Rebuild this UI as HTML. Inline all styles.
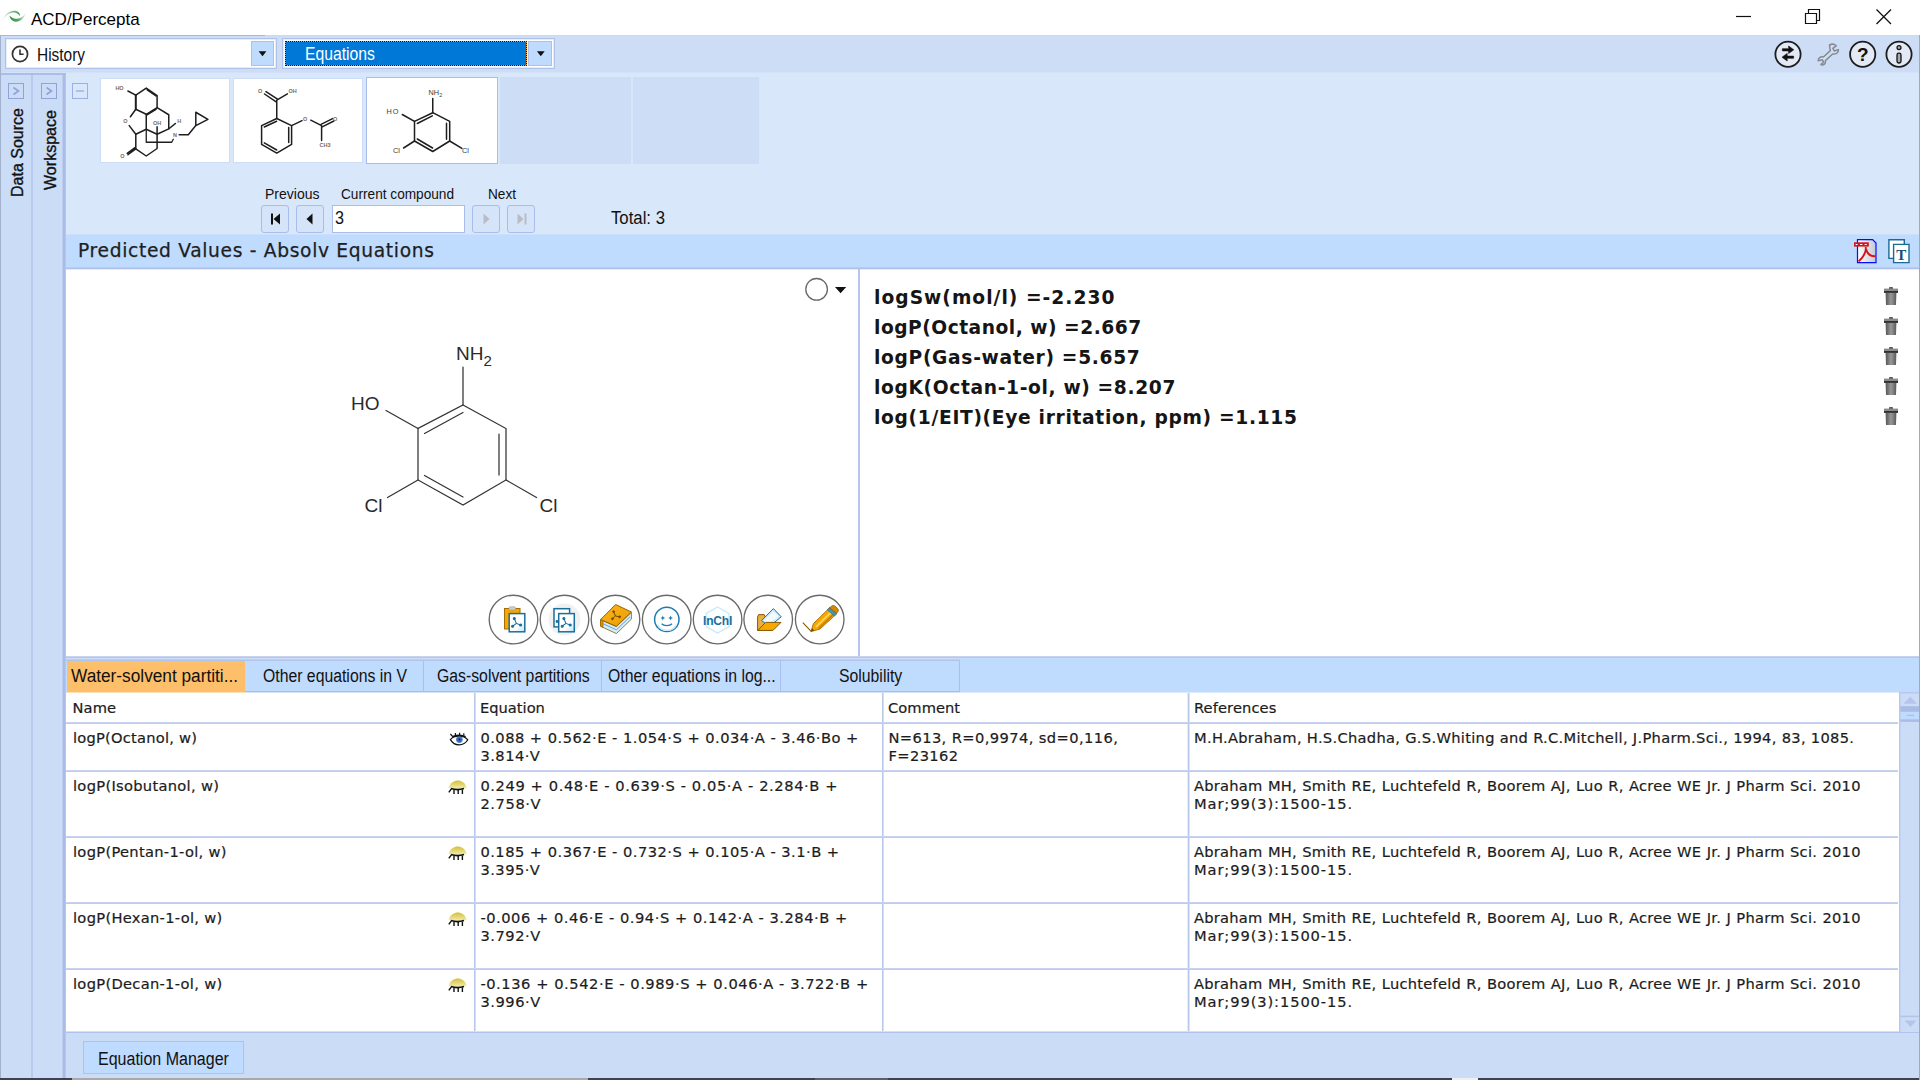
<!DOCTYPE html>
<html lang="en">
<head>
<meta charset="utf-8">
<title>ACD/Percepta</title>
<style>
*{box-sizing:border-box;margin:0;padding:0}
html,body{width:1920px;height:1080px;overflow:hidden;background:#d9e7fa;font-family:"Liberation Sans",sans-serif;color:#000}
.a{position:absolute}
.t{position:absolute;white-space:pre;line-height:1;transform-origin:0 0}
.ms{font-family:"Liberation Sans",sans-serif;color:#111;-webkit-text-stroke-width:0}
.vd{font-family:"DejaVu Sans","Liberation Sans",sans-serif;color:#1a1a1a}
#titlebar{left:0;top:0;width:1920px;height:35px;background:#fff}
#toolband{left:0;top:35px;width:1920px;height:38px;background:linear-gradient(to bottom,#cdd9ee 0 1px,#cdddf6 1px 37px,#d3e2f8 37px 38px)}
#leftedge{left:0;top:35px;width:1px;height:1045px;background:#a2b2cc}
#side{left:1px;top:73px;width:65px;height:1007px;background:linear-gradient(to right,#cbdcf6 0 61px,#bfcdf0 61px 62px,#aabbe6 62px 64px,#b6c6ed 64px 65px);border-top:2px solid #adbde8}
#sidediv{left:31px;top:75px;width:2px;height:1005px;background:#b9caef}
.sqb{position:absolute;width:16px;height:16px;border:1px solid #9db0e3}
.combo{position:absolute;background:#fff;border:1px solid #b0c2ea;box-shadow:inset 0 0 0 1px #e6ecf9}
.ddb{position:absolute;background:#bfdbfe;border:1px solid #adbfea}
.thumb{position:absolute;background:#fff;border:1px solid #cfdcf5}
.navb{position:absolute;width:28px;height:28px;border:1px solid #a9bdea;border-radius:3px;background:#d6e4f9}
#hdr{left:66px;top:234px;width:1854px;height:36px;background:linear-gradient(to bottom,#cce0fc 0 1px,#bfdbfe 1px 33px,#b8ccf2 33px 34px,#b0c2ea 34px 35px,#e5eaf8 35px 36px)}
#molpanel{left:66px;top:270px;width:792px;height:386px;background:#fff}
#vdiv{left:858px;top:269px;width:2px;height:389px;background:#b6c6ef}
#respanel{left:860px;top:270px;width:1059px;height:386px;background:#fff}
#rightedge{left:1919px;top:35px;width:1px;height:1045px;background:#9aabc9}
#band1{left:66px;top:656px;width:1854px;height:5px;background:linear-gradient(to bottom,#c8d4ef 0 1px,#b4c6ea 1px 2px,#c4ddfd 2px 3px,#bfdbfe 3px 5px)}
#band2{left:66px;top:658px;width:894px;height:3px;background:linear-gradient(to bottom,#cdddf6 0 1px,#bfcdf1 1px 2px,#b0c4ec 2px 3px)}
#tabbar{left:66px;top:661px;width:1854px;height:31px;background:#bfdbfe}
.tab{position:absolute;top:661px;height:31px;border-right:1px solid #a9c0ee;border-bottom:1px solid #aabce8}
#grid{left:66px;top:692px;width:1833px;height:340px;background:#fff}
.hl{position:absolute;left:66px;width:1832px;height:2px;background:linear-gradient(to bottom,#c8d3f1 0 1px,#bfcbee 1px 2px)}
.vl{position:absolute;top:692px;width:2px;height:340px;background:linear-gradient(to right,#b9c7eb 0 1px,#d5def4 1px 2px)}
#sb{left:1899px;top:692px;width:21px;height:340px;background:#cbdcf6;border-left:2px solid #b3c4ec}
#botbar{left:66px;top:1032px;width:1854px;height:48px;background:#cbdcf6;border-top:1px solid #b1c3ec}
.cell{position:absolute;white-space:pre;font-family:"DejaVu Sans","Liberation Sans",sans-serif;font-size:14.67px;line-height:18px;color:#1c1c1c;-webkit-text-stroke:.2px #1c1c1c}
.circ{position:absolute;width:49px;height:49px;border:1.6px solid #5a5a5a;border-radius:50%;background:#fff}
</style>
</head>
<body>
<!-- title bar -->
<div class="a" id="titlebar"></div>
<div class="a" id="toolband"></div>
<div class="a" style="left:0;top:35px;width:265px;height:1px;background:#a9b9d2"></div>
<div class="a" id="side"></div>
<div class="a" id="sidediv"></div>
<div class="a" id="leftedge"></div>

<div class="t" style="left:31px;top:10.5px;font-size:17px;color:#000">ACD/Percepta</div>

<!-- logo -->
<svg class="a" style="left:0;top:0" width="30" height="35" viewBox="0 0 30 35">
 <defs>
  <linearGradient id="lg1" x1="0" y1="0" x2="1" y2="0"><stop offset="0" stop-color="#4aa25a" stop-opacity=".08"/><stop offset=".45" stop-color="#4aa25a" stop-opacity=".55"/><stop offset="1" stop-color="#33914a"/></linearGradient>
  <linearGradient id="lg2" x1="0" y1="0" x2="1" y2="0"><stop offset="0" stop-color="#33914a"/><stop offset=".55" stop-color="#3f9a4e" stop-opacity=".9"/><stop offset="1" stop-color="#4aa25a" stop-opacity=".1"/></linearGradient>
 </defs>
 <path d="M2.2 21 C4.4 15 8.6 11.2 13.6 10.8 C17.8 10.6 20.4 13.2 19.8 16.2 C18.6 13.8 16.4 12.6 13.6 12.6 C9.2 12.8 5.6 15.6 2.2 21 Z" fill="url(#lg1)"/>
 <path d="M9.4 15.4 C9.8 19 13 21.8 16.6 21.7 C21.2 21.5 24.6 17.6 25.9 12.6 C23.6 16.6 20.6 18.8 17.2 18.8 C14 18.8 11.6 17.6 9.4 15.4 Z" fill="url(#lg2)"/>
</svg>
<!-- window controls -->
<svg class="a" style="left:1730px;top:0" width="170" height="35" viewBox="0 0 170 35">
 <path d="M6 16.5 H21" stroke="#111" stroke-width="1.2" fill="none"/>
 <path d="M75.5 13.5 H86.5 V23.5 H75.5 Z M78.5 13.5 V9.5 H89.5 V20.5 H86.5" stroke="#111" stroke-width="1.2" fill="none"/>
 <path d="M146.5 9.5 L161 24 M161 9.5 L146.5 24" stroke="#111" stroke-width="1.3" fill="none"/>
</svg>

<!-- combos -->
<div class="combo" style="left:5px;top:38px;width:272px;height:31px"></div>
<div class="ddb" style="left:251px;top:41px;width:23px;height:25px"></div>
<svg class="a" style="left:258px;top:50px" width="10" height="8"><path d="M0.6 1.2 H8.4 L4.5 6.2 Z" fill="#111"/></svg>
<svg class="a" style="left:10px;top:44px" width="20" height="20" viewBox="0 0 20 20"><circle cx="10" cy="10" r="7.6" fill="#fff" stroke="#333" stroke-width="1.7"/><path d="M10 5.5 V10.3 H13.6" fill="none" stroke="#333" stroke-width="1.6"/></svg>
<div class="t ms" style="left:36.8px;top:45.5px;font-size:18px;transform:scaleX(.857)">History</div>

<div class="combo" style="left:282px;top:38px;width:273px;height:31px"></div>
<div class="a" style="left:285px;top:41px;width:242px;height:25px;background:#f0963a;border:1px dotted #111"><div style="width:100%;height:100%;background:#0078d7"></div></div>
<div class="ddb" style="left:528px;top:41px;width:24px;height:25px"></div>
<svg class="a" style="left:536px;top:50px" width="10" height="8"><path d="M0.9 1.2 H8.7 L4.8 6.2 Z" fill="#111"/></svg>
<div class="t ms" style="left:305px;top:45px;font-size:18px;color:#fff;-webkit-text-stroke-width:0;transform:scaleX(.874)">Equations</div>

<!-- side tabs -->
<div class="sqb" style="left:8px;top:83px;border-color:#8fa3d9"></div>
<svg class="a" style="left:8px;top:83px" width="16" height="16"><path d="M5.5 4.5 L10.5 8 L5.5 11.5" fill="none" stroke="#8fa3d9" stroke-width="1.6"/></svg>
<div class="sqb" style="left:41px;top:83px;border-color:#8fa3d9"></div>
<svg class="a" style="left:41px;top:83px" width="16" height="16"><path d="M5.5 4.5 L10.5 8 L5.5 11.5" fill="none" stroke="#8fa3d9" stroke-width="1.6"/></svg>
<div class="sqb" style="left:72px;top:83px"></div>
<svg class="a" style="left:72px;top:83px" width="16" height="16"><path d="M4 8 H12" fill="none" stroke="#9db0e3" stroke-width="1.5"/></svg>
<div class="t ms" style="left:8.5px;top:197px;font-size:17px;-webkit-text-stroke-width:.35px;transform:rotate(-90deg) scaleX(.941)">Data Source</div>
<div class="t ms" style="left:41.5px;top:190px;font-size:17px;-webkit-text-stroke-width:.35px;transform:rotate(-90deg) scaleX(.944)">Workspace</div>

<!-- thumbnails -->
<div class="thumb" style="left:100px;top:78px;width:130px;height:85px"></div>
<div class="thumb" style="left:233px;top:78px;width:130px;height:85px"></div>
<div class="thumb" style="left:366px;top:77px;width:132px;height:87px;border:1px solid #a9bdea"></div>
<div class="a" style="left:500px;top:77px;width:131px;height:87px;background:#cdddf6"></div>
<div class="a" style="left:633px;top:77px;width:126px;height:87px;background:#cdddf6"></div>

<!-- navigation -->
<div class="t ms" style="left:265px;top:186px;font-size:15px;-webkit-text-stroke-width:0;transform:scaleX(.934)">Previous</div>
<div class="t ms" style="left:341px;top:186px;font-size:15px;-webkit-text-stroke-width:0;transform:scaleX(.910)">Current compound</div>
<div class="t ms" style="left:488px;top:186px;font-size:15px;-webkit-text-stroke-width:0;transform:scaleX(.908)">Next</div>
<div class="navb" style="left:261px;top:205px"></div>
<div class="navb" style="left:296px;top:205px"></div>
<div class="a" style="left:332px;top:205px;width:133px;height:28px;background:#fff;border:1px solid #a9bdea"></div>
<div class="navb" style="left:472px;top:205px"></div>
<div class="navb" style="left:507px;top:205px"></div>
<svg class="a" style="left:261px;top:205px" width="28" height="28"><path d="M11 8.5 V19.5" stroke="#111" stroke-width="2"/><path d="M19 8.5 V19.5 L12.5 14 Z" fill="#111"/></svg>
<svg class="a" style="left:296px;top:205px" width="28" height="28"><path d="M16.5 8.5 V19.5 L10.5 14 Z" fill="#111"/></svg>
<svg class="a" style="left:472px;top:205px" width="28" height="28"><path d="M11.5 8.5 V19.5 L17.5 14 Z" fill="#b9bcc4"/></svg>
<svg class="a" style="left:507px;top:205px" width="28" height="28"><path d="M10.5 8.5 V19.5 L16.5 14 Z" fill="#b9bcc4"/><path d="M18.5 8.5 V19.5" stroke="#b9bcc4" stroke-width="2"/></svg>
<div class="t ms" style="left:335px;top:209px;font-size:18px;transform:scaleX(.9)">3</div>
<div class="t ms" style="left:611px;top:209px;font-size:18px;transform:scaleX(.93)">Total: 3</div>

<!-- header -->
<div class="a" id="hdr"></div>
<div class="t vd" style="left:78px;top:242px;font-size:18.67px;letter-spacing:.668px;color:#1e1e1e;-webkit-text-stroke:.25px #1e1e1e">Predicted Values - Absolv Equations</div>
<div class="a" id="molpanel"></div>
<div class="a" id="vdiv"></div>
<div class="a" id="respanel"></div>

<!-- molecule -->
<svg class="a" style="left:330px;top:330px" width="250" height="200" viewBox="330 330 250 200">
 <g fill="none" stroke="#333" stroke-width="1.25" stroke-linecap="round">
  <path d="M463 405 L506 428.5 L506 480 L463 505 L418 480 L418 428.5 Z"/>
  <path d="M463 412.5 L424.5 433.5"/>
  <path d="M499 434 L499 475"/>
  <path d="M424.5 475.5 L463 497"/>
  <path d="M463 405 V367"/>
  <path d="M418 428.5 L386 410.5"/>
  <path d="M418 480 L387.5 497.5"/>
  <path d="M506 480 L536.5 497.5"/>
 </g>
 <g font-family="Liberation Sans, sans-serif" font-size="19" fill="#2a2a2a">
  <text x="456" y="359.6">NH<tspan font-size="15" dy="6.6">2</tspan></text>
  <text x="351" y="409.8">HO</text>
  <text x="364.6" y="511.6">Cl</text>
  <text x="539.5" y="511.5">Cl</text>
 </g>
</svg>
<svg class="a" style="left:803px;top:277px" width="48" height="26"><circle cx="13.6" cy="12.3" r="10.8" fill="#fff" stroke="#666" stroke-width="1.3"/><path d="M32 10 H43.2 L37.6 16.2 Z" fill="#111"/></svg>

<!-- results -->
<div class="t vd" style="left:874px;top:289px;font-size:18.67px;font-weight:700;letter-spacing:1.02px;color:#151515">logSw(mol/l) =-2.230</div>
<div class="t vd" style="left:874px;top:319px;font-size:18.67px;font-weight:700;letter-spacing:.5px;color:#151515">logP(Octanol, w) =2.667</div>
<div class="t vd" style="left:874px;top:349px;font-size:18.67px;font-weight:700;letter-spacing:.67px;color:#151515">logP(Gas-water) =5.657</div>
<div class="t vd" style="left:874px;top:379px;font-size:18.67px;font-weight:700;letter-spacing:.64px;color:#151515">logK(Octan-1-ol, w) =8.207</div>
<div class="t vd" style="left:874px;top:409px;font-size:18.67px;font-weight:700;letter-spacing:.678px;color:#151515">log(1/EIT)(Eye irritation, ppm) =1.115</div>

<!-- tabs -->
<div class="a" id="band1"></div>
<div class="a" id="band2"></div>
<div class="a" id="tabbar"></div>
<div class="tab" style="left:67px;width:178px;height:31px;background:#fdbf6a;border:none"></div>
<div class="tab" style="left:245px;width:179px"></div>
<div class="tab" style="left:424px;width:178px"></div>
<div class="tab" style="left:602px;width:179px"></div>
<div class="tab" style="left:781px;width:179px"></div>
<div class="t ms" style="left:71px;top:666.5px;font-size:18px;transform:scaleX(.958)">Water-solvent partiti...</div>
<div class="t ms" style="left:263px;top:666.5px;font-size:18px;transform:scaleX(.877)">Other equations in V</div>
<div class="t ms" style="left:437px;top:666.5px;font-size:18px;transform:scaleX(.877)">Gas-solvent partitions</div>
<div class="t ms" style="left:608px;top:666.5px;font-size:18px;transform:scaleX(.877)">Other equations in log...</div>
<div class="t ms" style="left:839px;top:666.5px;font-size:18px;transform:scaleX(.877)">Solubility</div>

<!-- grid -->
<div class="a" id="grid"></div>
<div class="vl" style="left:474px"></div>
<div class="vl" style="left:882px"></div>
<div class="vl" style="left:1187px;width:3px;background:linear-gradient(to right,#e6ebf8 0 1px,#b9c7eb 1px 2px,#dfe5f6 2px 3px)"></div>
<div class="hl" style="top:722px"></div>
<div class="hl" style="top:770px"></div>
<div class="hl" style="top:836px"></div>
<div class="hl" style="top:902px"></div>
<div class="hl" style="top:968px"></div>
<div class="a" id="sb"></div>
<div class="a" id="botbar"></div>
<div class="a" style="left:66px;top:1031px;width:1833px;height:1px;background:#d8dff3"></div>
<div class="a" style="left:66px;top:692px;width:894px;height:1px;background:#d8e1f5"></div>
<div class="a" style="left:960px;top:692px;width:939px;height:1px;background:#deebfe"></div>
<div class="a" style="left:67px;top:692px;width:178px;height:1px;background:#fee0b5"></div>

<div class="cell" style="left:72.5px;top:699px;letter-spacing:.1px">Name</div>
<div class="cell" style="left:480px;top:699px;letter-spacing:0">Equation</div>
<div class="cell" style="left:888px;top:699px;letter-spacing:.05px">Comment</div>
<div class="cell" style="left:1194px;top:699px;letter-spacing:.1px">References</div>

<div class="cell" style="left:73px;top:729px;letter-spacing:.228px">logP(Octanol, w)</div>
<div class="cell" style="left:480.4px;top:729px;letter-spacing:.477px">0.088 + 0.562·E - 1.054·S + 0.034·A - 3.46·Bo +
3.814·V</div>
<div class="cell" style="left:888.4px;top:729px;letter-spacing:.4px">N=613, R=0,9974, sd=0,116,
F=23162</div>
<div class="cell" style="left:1194px;top:729px;letter-spacing:.3px">M.H.Abraham, H.S.Chadha, G.S.Whiting and R.C.Mitchell, J.Pharm.Sci., 1994, 83, 1085.</div>

<div class="cell" style="left:73px;top:777px;letter-spacing:.3px">logP(Isobutanol, w)</div>
<div class="cell" style="left:480.4px;top:777px;letter-spacing:.6px">0.249 + 0.48·E - 0.639·S - 0.05·A - 2.284·B +
2.758·V</div>
<div class="cell" style="left:1194px;top:777px;letter-spacing:.234px;word-spacing:.5px">Abraham MH, Smith RE, Luchtefeld R, Boorem AJ, Luo R, Acree WE Jr. J Pharm Sci. 2010
<span style="letter-spacing:.9px;word-spacing:0">Mar;99(3):1500-15.</span></div>

<div class="cell" style="left:73px;top:843px;letter-spacing:.3px">logP(Pentan-1-ol, w)</div>
<div class="cell" style="left:480.4px;top:843px;letter-spacing:.477px">0.185 + 0.367·E - 0.732·S + 0.105·A - 3.1·B +
3.395·V</div>
<div class="cell" style="left:1194px;top:843px;letter-spacing:.234px;word-spacing:.5px">Abraham MH, Smith RE, Luchtefeld R, Boorem AJ, Luo R, Acree WE Jr. J Pharm Sci. 2010
<span style="letter-spacing:.9px;word-spacing:0">Mar;99(3):1500-15.</span></div>

<div class="cell" style="left:73px;top:909px;letter-spacing:.3px">logP(Hexan-1-ol, w)</div>
<div class="cell" style="left:480.4px;top:909px;letter-spacing:.53px">-0.006 + 0.46·E - 0.94·S + 0.142·A - 3.284·B +
3.792·V</div>
<div class="cell" style="left:1194px;top:909px;letter-spacing:.234px;word-spacing:.5px">Abraham MH, Smith RE, Luchtefeld R, Boorem AJ, Luo R, Acree WE Jr. J Pharm Sci. 2010
<span style="letter-spacing:.9px;word-spacing:0">Mar;99(3):1500-15.</span></div>

<div class="cell" style="left:73px;top:975px;letter-spacing:.3px">logP(Decan-1-ol, w)</div>
<div class="cell" style="left:480.4px;top:975px;letter-spacing:.555px">-0.136 + 0.542·E - 0.989·S + 0.046·A - 3.722·B +
3.996·V</div>
<div class="cell" style="left:1194px;top:975px;letter-spacing:.234px;word-spacing:.5px">Abraham MH, Smith RE, Luchtefeld R, Boorem AJ, Luo R, Acree WE Jr. J Pharm Sci. 2010
<span style="letter-spacing:.9px;word-spacing:0">Mar;99(3):1500-15.</span></div>

<!-- bottom -->
<div class="a" style="left:83px;top:1041px;width:161px;height:33px;background:#bfdbff;border:1px solid #a9c4f2"></div>
<div class="t ms" style="left:98px;top:1050px;font-size:18px;transform:scaleX(.89)">Equation Manager</div>
<div class="a" style="left:0;top:1078px;width:1920px;height:2px;background:#3d4150"></div>
<div class="a" style="left:72px;top:1078px;width:516px;height:2px;background:#a9a9a9"></div>
<div class="a" style="left:815px;top:1078px;width:73px;height:2px;background:#5b5f6b"></div>
<div class="a" style="left:1452px;top:1078px;width:26px;height:2px;background:#f0f0f0"></div>

<!-- thumbnail molecules -->
<svg class="a" style="left:100px;top:76px" width="132" height="90" viewBox="100 76 132 90">
 <g fill="none" stroke="#1e1e1e" stroke-width="1.5" stroke-linecap="round" stroke-linejoin="round">
  <path d="M135.8 95.2 L146.25 88.1 L157.1 95.6 L157.1 107.7 L146.25 114.3 L135.8 109.3"/>
  <path d="M135.8 95.2 L135.8 109.3" stroke-width="2"/>
  <path d="M147.2 89.8 L156 96" />
  <path d="M156 109.4 L147 114.9" stroke-width="1.6"/>
  <path d="M127.9 91 L135.8 95.2"/>
  <path d="M135.8 109.3 L130.4 116.8"/>
  <path d="M129.2 125.6 L135.8 134.3 L146.25 129.3 L146.25 114.3"/>
  <path d="M146.25 129.3 L157.1 134.3 L168.75 128.9 L168.75 114.75 L157.1 107.7"/>
  <path d="M169.2 128.5 L175.4 123.5" stroke-width="1.6"/>
  <path d="M157.1 126.8 L157.1 148.5 L146.25 156 L135.8 148.9 L135.8 134.3"/>
  <path d="M135.8 148.9 L127.9 154.75 M135 147.6 L127.2 153.3" />
  <path d="M146.25 129.3 L146.25 142.25 L171.7 142.25 L173.3 139.3" stroke-width="1.3"/>
  <path d="M179.2 134.75 L188.3 134.75 L195.8 125.6 L195.8 112.25 L207.9 119.3 L195.8 125.6"/>
 </g>
 <g font-family="Liberation Sans, sans-serif" font-size="5.5" font-weight="700" fill="#7a6a58">
  <text x="115.4" y="90.3">HO</text>
  <text x="123.2" y="123.4">O</text>
  <text x="153" y="124.6">OH</text>
  <text x="177.3" y="123.3">H</text>
  <text x="173" y="137">N</text>
  <text x="120.3" y="157.6">O</text>
 </g>
</svg>
<svg class="a" style="left:232px;top:76px" width="132" height="90" viewBox="232 76 132 90">
 <g fill="none" stroke="#1e1e1e" stroke-width="1.5" stroke-linecap="round" stroke-linejoin="round">
  <path d="M276.75 118.5 L291.6 125.6 L291.6 144.3 L276.75 153.1 L261.6 144.3 L261.6 125.6 Z"/>
  <path d="M264.3 127 L276.6 121.2 M288.7 127.5 L288.7 142.6 M264.3 142.8 L276.7 150"/>
  <path d="M276.75 118.5 L276.75 100.2 L287.4 93.9"/>
  <path d="M277.5 99.2 L266 91.6 M275.8 101.6 L264.5 94"/>
  <path d="M291.6 125.6 L302 120.6 M310.75 120.2 L321.6 125.6 L321.6 140.6"/>
  <path d="M321 124.4 L332.6 118.6 M322.2 126.8 L333.9 121"/>
 </g>
 <g font-family="Liberation Sans, sans-serif" font-size="5.5" font-weight="700" fill="#7a6a58">
  <text x="258" y="93.4">O</text>
  <text x="288.6" y="93.4">OH</text>
  <text x="303" y="120.5">O</text>
  <text x="333" y="120.5">O</text>
  <text x="319.5" y="147.3">CH3</text>
 </g>
</svg>
<svg class="a" style="left:366px;top:76px" width="132" height="90" viewBox="366 76 132 90">
 <g fill="none" stroke="#1e1e1e" stroke-width="1.5" stroke-linecap="round" stroke-linejoin="round">
  <path d="M432.75 112.7 L449.7 121.4 L449.7 141 L432.75 151.5 L414.5 141 L414.5 121.4 Z"/>
  <path d="M417.3 123.5 L432.3 115.8 M446.5 123.3 L446.5 139.2 M417.3 139 L432.6 148"/>
  <path d="M432.75 112.7 V98.4 M414.5 121.4 L402.3 114.5 M414.5 141 L403.6 148 M449.7 141 L461.9 148.4"/>
 </g>
 <g font-family="Liberation Sans, sans-serif" font-size="7.3" fill="#3a3a3a">
  <text x="428.6" y="94.9">NH<tspan font-size="5.3" dy="2">2</tspan></text>
  <text x="386.6" y="114.2" letter-spacing=".8">HO</text>
  <text x="393" y="153.2">Cl</text>
  <text x="462" y="153.2">Cl</text>
 </g>
</svg>

<!-- top-right toolbar icons -->
<svg class="a" style="left:1770px;top:36px" width="150" height="36" viewBox="1770 36 150 36">
 <g fill="#e3e9f5" stroke="#1c1c1c" stroke-width="1.8">
  <circle cx="1788" cy="54.3" r="12.6"/>
  <circle cx="1862.7" cy="54.3" r="12.6"/>
  <circle cx="1899" cy="54.3" r="12.6"/>
 </g>
 <path d="M1782.4 48.7 H1788.6 V46 L1793.8 49.8 L1788.6 53.6 V50.9 H1782.4 Z M1793.6 56.1 H1787.2 V53.4 L1782 57.2 L1787.2 61 V58.3 H1793.6 Z" fill="#111" stroke="#111" stroke-width=".6" stroke-linejoin="round"/>
 <path d="M1829.5 45 C1832 43.6 1834.6 44.2 1836.2 45.8 L1832.8 48.4 L1834.4 51 L1838.4 49.6 C1838.6 52.2 1836.6 54.6 1832.6 54 L1825.4 60.6 C1826.2 64.2 1823 65.6 1820.8 64.6 L1823.6 62.2 L1822.4 59.8 L1818.2 60.8 C1818 58.2 1820.6 56.2 1823.4 57 L1830.4 50.6 C1829.6 48.4 1829.8 46.4 1829.5 45 Z" fill="#d3dff3" stroke="#858a93" stroke-width="1.5" stroke-linejoin="round"/>
 <text x="1862.8" y="61.2" font-family="Liberation Sans, sans-serif" font-size="19" font-weight="700" text-anchor="middle" fill="#111">?</text>
 <circle cx="1899" cy="47.6" r="2" fill="#aaa" stroke="#111" stroke-width="1.2"/>
 <rect x="1897" y="53.2" width="4" height="9.8" rx="1.8" fill="#aaa" stroke="#111" stroke-width="1.3"/>
</svg>

<!-- header icons: pdf + copy text -->
<svg class="a" style="left:1850px;top:237px" width="64" height="30" viewBox="1850 237 64 30">
 <defs><linearGradient id="pg" x1="0" y1="0" x2="1" y2="0"><stop offset="0" stop-color="#fff"/><stop offset="1" stop-color="#c3c9d6"/></linearGradient></defs>
 <path d="M1857.5 239.6 H1872.6 L1876 243 V262.6 H1857.5 Z" fill="url(#pg)" stroke="#0a0aff" stroke-width="1.2"/>
 <rect x="1854" y="242.3" width="14.8" height="4.3" fill="#d2141a"/>
 <path d="M1855.6 244.5 H1857.6 M1860 244.5 H1862.4 M1864.6 244.5 H1866.8" stroke="#fff" stroke-width="1.1"/>
 <path d="M1865.6 247 C1866.6 251 1865 255.5 1858.6 261.5 M1866.2 249.5 C1867.5 254 1870.5 256.5 1875.5 256.3" fill="none" stroke="#d2141a" stroke-width="1.9"/>
 <path d="M1888.9 239.8 H1904.3 V258.4 H1888.9 Z" fill="#fff" stroke="#1b6a95" stroke-width="1.4"/>
 <path d="M1893.6 244.4 H1909 V262.6 H1893.6 Z" fill="#fff" stroke="#1b6a95" stroke-width="1.4"/>
 <text x="1901.3" y="260" font-family="Liberation Serif, serif" font-size="15" font-weight="700" text-anchor="middle" fill="#174e6e">T</text>
</svg>

<!-- trash icons -->
<svg class="a" style="left:1882px;top:286px" width="18" height="142" viewBox="0 0 18 142">
 <defs>
  <linearGradient id="tg" x1="0" y1="0" x2="1" y2="0"><stop offset="0" stop-color="#555"/><stop offset=".5" stop-color="#999"/><stop offset="1" stop-color="#5a5a5a"/></linearGradient>
  <g id="tr"><rect x="7" y="1" width="4" height="2.4" rx="1" fill="#555"/><rect x="2" y="2.6" width="14" height="3" fill="#8a8a8a"/><rect x="2" y="5.2" width="14" height="1.6" fill="#111"/><path d="M3.6 7 H14.4 L14 19 H4 Z" fill="url(#tg)"/></g>
 </defs>
 <use href="#tr" y="0"/><use href="#tr" y="30"/><use href="#tr" y="60"/><use href="#tr" y="90"/><use href="#tr" y="120"/>
</svg>

<!-- circle buttons -->
<svg class="a" style="left:486px;top:592px" width="362" height="56" viewBox="486 592 362 56">
 <defs>
  <linearGradient id="pp" x1="0" y1="0" x2="1" y2="1"><stop offset="0" stop-color="#fff"/><stop offset=".6" stop-color="#fff"/><stop offset="1" stop-color="#bfe3f7"/></linearGradient>
  <linearGradient id="og" x1="0" y1="0" x2="1" y2="1"><stop offset="0" stop-color="#ffb81c"/><stop offset="1" stop-color="#e89a00"/></linearGradient>
 </defs>
 <g fill="#fff" stroke="#6a6a6a" stroke-width="1.35">
  <circle cx="513.5" cy="619.5" r="24.3"/><circle cx="564.5" cy="619.5" r="24.3"/><circle cx="615.5" cy="619.5" r="24.3"/>
  <circle cx="666.7" cy="619.5" r="24.3"/><circle cx="717.6" cy="619.5" r="24.3"/><circle cx="768.2" cy="619.5" r="24.3"/><circle cx="819.7" cy="619.5" r="24.3"/>
 </g>
 <!-- paste -->
 <rect x="504.5" y="608.5" width="15.5" height="20.5" fill="#f6a800" stroke="#a86c00" stroke-width="1"/>
 <rect x="509" y="606.8" width="6.5" height="3.2" rx="1.2" fill="#cfcfcf" stroke="#9a9a9a" stroke-width=".6"/>
 <rect x="509.2" y="613.6" width="15.6" height="18.2" fill="url(#pp)" stroke="#1b6f9c" stroke-width="1.5"/>
 <g stroke="#1b6f9c" stroke-width="1.1" fill="#1b6f9c"><path d="M514.3 618.6 L516.4 623.4 L520.6 625 M516.4 623.4 L512.6 626.2" fill="none"/><circle cx="514.3" cy="618.6" r="1"/><circle cx="520.6" cy="625" r="1"/><circle cx="512.6" cy="626.2" r="1"/></g>
 <!-- copy -->
 <circle cx="564.5" cy="619.5" r="16" fill="#f1f1f1"/>
 <rect x="554" y="608.7" width="15.6" height="18.2" fill="#fff" stroke="#1b6f9c" stroke-width="1.5"/>
 <rect x="558.7" y="613.6" width="15.6" height="18.2" fill="url(#pp)" stroke="#1b6f9c" stroke-width="1.5"/>
 <g stroke="#1b6f9c" stroke-width="1.1" fill="#1b6f9c"><path d="M563.9 618.6 L566 623.4 L570.2 625 M566 623.4 L562.2 626.2" fill="none"/><circle cx="563.9" cy="618.6" r="1"/><circle cx="570.2" cy="625" r="1"/><circle cx="562.2" cy="626.2" r="1"/><circle cx="557" cy="621.5" r=".9"/></g>
 <!-- book -->
 <path d="M600.6 626.3 L616.4 633.6 L631.4 619.2 L631.4 612.4 L616.4 626.6 L600.6 619.8 Z" fill="#d6edfa" stroke="#8a5a00" stroke-width=".8" stroke-linejoin="round"/>
 <path d="M602.5 623.5 L616.4 629.8 L630 616.8" fill="none" stroke="#5aa6d0" stroke-width="1"/>
 <path d="M600.6 619.6 L615.6 604.5 L631.4 612 L616.4 626.4 Z" fill="url(#og)" stroke="#9a6200" stroke-width="1" stroke-linejoin="round"/>
 <path d="M600.6 619.6 L600.6 626.3 L603 627.4 L603 620.6 Z" fill="#e09600" stroke="#8a5a00" stroke-width=".6"/>
 <g stroke="#6e4a00" stroke-width="1" fill="#6e4a00"><path d="M613.6 611.6 L615.4 616 L619.6 616.8 M615.4 616 L612.4 618.8" fill="none"/><circle cx="613.6" cy="611.6" r=".9"/><circle cx="619.6" cy="616.8" r=".9"/><circle cx="612.4" cy="618.8" r=".9"/></g>
 <!-- smiley -->
 <circle cx="666.8" cy="619.4" r="12.2" fill="#fff" stroke="#1e7ab0" stroke-width="1.5"/>
 <path d="M657.6 624.6 A10.6 10.6 0 0 0 676.4 624.6" fill="none" stroke="#cfeaf9" stroke-width="1.6"/>
 <g fill="#1e7ab0"><path d="M662.8 615.6 L663.5 617.3 L665.2 618 L663.5 618.7 L662.8 620.4 L662.1 618.7 L660.4 618 L662.1 617.3 Z"/><path d="M670.6 615.6 L671.3 617.3 L673 618 L671.3 618.7 L670.6 620.4 L669.9 618.7 L668.2 618 L669.9 617.3 Z"/></g>
 <path d="M661.6 623.8 C664 626.2 669.6 626.2 672 623.8" fill="none" stroke="#1e7ab0" stroke-width="1.3"/>
 <!-- inchi -->
 <path d="M717.6 607 L729 613.4 L729 626.6 L717.6 633 L706.2 626.6 L706.2 613.4 Z" fill="none" stroke="#c6e9fb" stroke-width="1.2"/>
 <text x="717.6" y="624.6" font-family="Liberation Sans, sans-serif" font-size="12" font-weight="700" text-anchor="middle" fill="#1b6f9c" letter-spacing="-.2">InChI</text>
 <!-- folder -->
 <path d="M757.6 617 L758.6 614.6 L764.2 614.6 L765.4 617 L771.6 617 L771.6 630.4 L757.6 630.4 Z" fill="#e9b040" stroke="#8a5a00" stroke-width="1" stroke-linejoin="round"/>
 <path d="M761.6 620.6 L773.4 608.6 L781.2 616.8 L769.4 626.6 Z" fill="#d4edfb" stroke="#1b6f9c" stroke-width="1" stroke-linejoin="round"/>
 <path d="M764 620.5 L773.5 611.4 L778.6 616.6 L768.6 623.6 Z" fill="#fff" opacity=".7"/>
 <path d="M757.8 630.4 L765.6 622.4 L781 622.4 L773 630.4 Z" fill="#f6a800" stroke="#8a5a00" stroke-width="1" stroke-linejoin="round"/>
 <!-- pencil -->
 <path d="M802.8 622.6 L811.2 631.4" fill="none" stroke="#8a5a00" stroke-width="1.1"/>
 <path d="M811 631.6 L813.4 623.6 L830 607.4 L836.8 613.6 L820 629 Z" fill="#f6a800" stroke="#a86c00" stroke-width=".9" stroke-linejoin="round"/>
 <path d="M816 626.8 L833.2 610.2" stroke="#ffd466" stroke-width="1.6" fill="none"/>
 <path d="M818.6 628.6 L835.4 612.4" stroke="#c27c00" stroke-width="1.4" fill="none"/>
 <path d="M827.4 609.8 L830 607.4 L836.8 613.6 L834.4 616 Z" fill="#3f95c6" stroke="#1b6f9c" stroke-width=".7"/>
 <path d="M829.6 607.8 L831.8 606 C833 605.2 834 605.4 835 606.2 L837.6 608.6 C838.6 609.6 838.6 610.8 837.8 611.8 L836.4 613.4 Z" fill="#d48a00" stroke="#8a5a00" stroke-width=".8"/>
 <path d="M811 631.6 L812 628.2 L814.4 630.4 Z" fill="#6e4a00"/>
</svg>

<!-- eye icons -->
<svg class="a" style="left:447px;top:730px" width="24" height="270" viewBox="447 730 24 270">
 <defs>
  <radialGradient id="ir" cx=".5" cy=".5" r=".5"><stop offset="0" stop-color="#0b1e4a"/><stop offset=".35" stop-color="#2a5aa8"/><stop offset="1" stop-color="#5f8fd0"/></radialGradient>
  <linearGradient id="lid" x1="0" y1="0" x2="0" y2="1"><stop offset="0" stop-color="#d3bf36"/><stop offset="1" stop-color="#f4efb4"/></linearGradient>
  <g id="ce"><path d="M448.6 788 C449.6 782.6 454.6 780.4 457.8 780.4 C461.2 780.4 465.6 782.6 466.6 788 C461 789.4 454 789.4 448.6 788 Z" fill="url(#lid)"/><path d="M451 788.6 C455 789.8 460 789.8 464 788.6" fill="none" stroke="#111" stroke-width="1.6"/><path d="M451.4 788.8 L448.8 792.4 M454 789.6 V794 M458.2 789.8 V794 M462.4 789.4 V794" stroke="#111" stroke-width="1.4" fill="none"/></g>
 </defs>
 <path d="M450.4 739.6 C453.6 735.2 463.6 734.6 467.8 739.8 C463.8 746.4 454.4 746.6 450.4 739.6 Z" fill="#fff" stroke="#111" stroke-width="1.2"/>
 <circle cx="459.4" cy="739.6" r="3.4" fill="url(#ir)"/>
 <path d="M453 736.6 C457 735 462 735 465.6 736.8" fill="none" stroke="#111" stroke-width="1.8"/>
 <path d="M453 736.8 L450.4 734 M455.4 735.4 V733 M459.6 735 V732.8 M463.8 735.6 V733.2" stroke="#111" stroke-width="1.2" fill="none"/>
 <use href="#ce"/><use href="#ce" y="66"/><use href="#ce" y="132"/><use href="#ce" y="198"/>
</svg>

<!-- scrollbar buttons -->
<svg class="a" style="left:1899px;top:692px" width="21" height="340" viewBox="0 0 21 340">
 <rect x="0" y="0" width="21" height="340" fill="#cbdcf6"/>
 <rect x="0" y="0" width="21" height="1.5" fill="#b9c8ee"/>
 <path d="M4.3 11.8 L11.2 4.7 L18 11.8 Z" fill="#b6c3ea"/>
 <rect x="0" y="14.2" width="21" height="5.7" fill="#aabbe6"/>
 <rect x="0" y="19.9" width="21" height="7.5" fill="#bfdbfe"/>
 <path d="M7.5 23.4 H15" stroke="#aebfe8" stroke-width="1.3"/>
 <rect x="0" y="27.3" width="21" height="2.6" fill="#aabbe6"/>
 <rect x="0" y="323.6" width="21" height="1.6" fill="#b3c4ec"/>
 <path d="M5.5 328.5 L11.5 335 L17.5 328.5 Z" fill="#b6c3ea"/>
 <rect x="0" y="0" width="1.5" height="340" fill="#b9c8ee"/>
</svg>

<div class="a" id="rightedge"></div>
</body>
</html>
